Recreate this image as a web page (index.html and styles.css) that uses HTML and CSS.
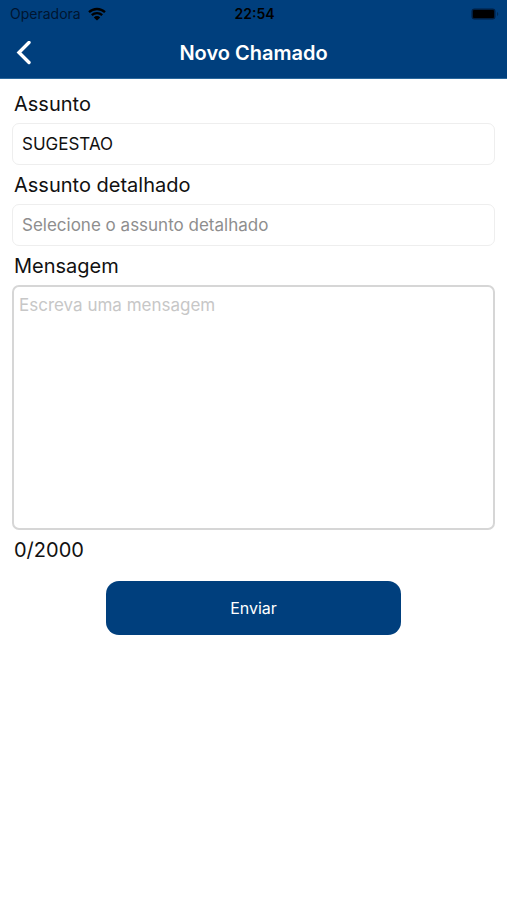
FILE: index.html
```
<!DOCTYPE html>
<html lang="pt-BR">
  <head>
    <meta charset="UTF-8" />
    <meta name="viewport" content="width=device-width, initial-scale=1.0" />
    <title>Novo Chamado</title>
    <link rel="stylesheet" href="styles.css">
  </head>
  <body>
    <header class="header">
      <div class="status-bar">
        <div class="carrier">
          <span>Operadora</span>
          <svg class="wifi" viewBox="0 0 18 14" aria-hidden="true">
            <path d="M1 5.2a11.6 11.6 0 0 1 16 0M3.8 8.2a7.6 7.6 0 0 1 10.4 0" fill="none" stroke="currentColor" stroke-width="2.3" />
            <path d="M9 13.6 5.8 10.4a4.6 4.6 0 0 1 6.4 0z" fill="currentColor" />
          </svg>
        </div>
        <time class="clock">22:54</time>
        <div class="battery-box">
          <svg class="battery" viewBox="0 0 28 12" aria-hidden="true">
            <rect x="0.5" y="0.5" width="24" height="11" rx="3" fill="#001f42" />
            <rect x="2" y="2" width="21" height="8" rx="1" fill="#000" />
            <path d="M26 4a2.2 2.2 0 0 1 0 4z" fill="#002a55" />
          </svg>
        </div>
      </div>
      <div class="nav-bar">
        <button class="back" type="button" aria-label="Voltar">
          <svg viewBox="0 0 16 24" aria-hidden="true">
            <path d="M13 1.5 3 11.5l10 10" fill="none" stroke="currentColor" stroke-width="3.4" stroke-linecap="round" />
          </svg>
        </button>
        <h1 class="title">Novo Chamado</h1>
      </div>
    </header>

    <main>
      <form class="form">
        <label class="label" for="subject">Assunto</label>
        <select class="field" id="subject">
          <option>SUGESTAO</option>
        </select>

        <label class="label" for="detail">Assunto detalhado</label>
        <select class="field empty" id="detail">
          <option value="">Selecione o assunto detalhado</option>
        </select>

        <label class="label" for="message">Mensagem</label>
        <textarea class="message" id="message" maxlength="2000" placeholder="Escreva uma mensagem"></textarea>
        <div class="label" id="counter">0/2000</div>

        <button class="send" type="button">Enviar</button>
      </form>
    </main>

    <script>
      const message = document.getElementById("message");
      const counter = document.getElementById("counter");

      message.addEventListener("input", () => {
        counter.textContent = `${message.value.length}/2000`;
      });
    </script>
  </body>
</html>
```
FILE: styles.css
```
* {
  box-sizing: border-box;
}
body {
  margin: 0;
  background-color: #fff;
  color: #111;
  font-family: Inter, "Liberation Sans", sans-serif;
}
button,
select,
textarea {
  font-family: inherit;
}

.header {
  background-color: #003f7d;
  border-bottom: 1px solid #2b689c;
}
.status-bar {
  display: grid;
  grid-template-columns: 1fr auto 1fr;
  align-items: center;
  height: 27px;
  padding: 0 8px 0 10px;
  color: #000;
  font-size: 14px;
}
.carrier {
  display: flex;
  align-items: center;
  gap: 7px;
  color: #001530;
}
.wifi {
  width: 18px;
  height: 14px;
  color: #000;
}
.clock {
  font-weight: 600;
}
.battery-box {
  display: flex;
  justify-content: flex-end;
}
.battery {
  width: 28px;
  height: 12px;
}
.nav-bar {
  display: grid;
  grid-template-columns: 48px 1fr 48px;
  align-items: center;
  height: 51px;
  color: #fff;
}
.back {
  display: flex;
  justify-content: center;
  padding: 8px 0;
  border: none;
  background: none;
  color: inherit;
  cursor: pointer;
}
.back svg {
  width: 16px;
  height: 24px;
}
.title {
  margin: 0;
  font-size: 20px;
  font-weight: 600;
  text-align: center;
}

.form {
  display: flex;
  flex-direction: column;
  padding: 5px 12px 24px;
}
.label {
  padding: 2px 2px 0;
  font-size: 20px;
  line-height: 37px;
}
.field {
  appearance: none;
  height: 42px;
  padding: 0 9px;
  border: 1px solid #eee;
  border-radius: 7px;
  background-color: #fff;
  color: #111;
  font-size: 17px;
}
.empty {
  color: #8e8e8e;
}
.message {
  height: 245px;
  padding: 8px 5px;
  border: 2px solid #d6d6d6;
  border-radius: 7px;
  background-color: #fff;
  color: #111;
  font-size: 17px;
  resize: none;
}
.message::placeholder {
  color: #c7c7c7;
}
.send {
  align-self: center;
  width: 61%;
  height: 54px;
  margin-top: 12px;
  border: none;
  border-radius: 13px;
  background-color: #003f7d;
  color: #fff;
  font-size: 16px;
  cursor: pointer;
}
```
